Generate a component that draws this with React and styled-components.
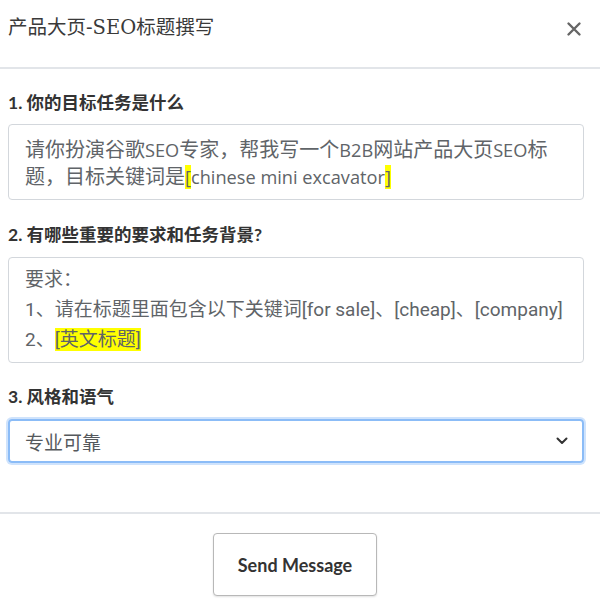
import React from "react";
import styled, { createGlobalStyle } from "styled-components";

const Global = createGlobalStyle`
  html, body { margin: 0; padding: 0; background: #fff; }
  body { font-family: "Lato", "Noto Sans CJK SC", sans-serif; }
  * { box-sizing: border-box; }
`;

const Page = styled.div`
  width: 600px;
  height: 609px;
  display: flex;
  flex-direction: column;
  background: #fff;
`;

const Header = styled.header`
  height: 69px;
  padding: 14px 18px 0 8px;
  display: flex;
  justify-content: space-between;
  align-items: flex-start;
  border-bottom: 2px solid #e2e5e9;
`;

const Title = styled.h1`
  margin: 0;
  font-family: "DejaVu Serif", "Noto Sans CJK SC", serif;
  font-weight: normal;
  font-size: 19.5px;
  line-height: 28px;
  color: #3a3a3a;
`;

const Close = styled.button`
  border: none;
  background: none;
  padding: 0;
  margin-top: 7px;
  width: 16px;
  height: 16px;
  display: flex;
  cursor: pointer;
`;

const Body = styled.main`
  padding: 22px 16px 0 8px;
  display: flex;
  flex-direction: column;
  height: 445px;
  border-bottom: 2px solid #e2e5e9;
`;

const Label = styled.div`
  font-family: "Lato", "Noto Sans CJK SC", sans-serif;
  font-weight: 700;
  font-size: 17.5px;
  line-height: 24px;
  color: #333;
  margin-top: ${(p) => p.$mt || 0}px;
`;

const Box = styled.div`
  margin-top: ${(p) => p.$mt}px;
  height: ${(p) => p.$h}px;
  border: 1px solid #d3d7dc;
  border-radius: 4px;
  padding: ${(p) => p.$pad};
  font-family: ${(p) => p.$font}, "Noto Sans CJK SC", sans-serif;
  font-size: ${(p) => p.$size}px;
  line-height: ${(p) => p.$lh}px;
  color: #606468;
  overflow: hidden;
`;

const Latin = styled.span`
  font-size: ${(p) => p.$size}px;
  line-height: 1;
`;

const Line = styled.div``;

const Mark = styled.span`
  background: #ffff00;
`;

const Select = styled.div`
  margin-top: 10px;
  height: 44px;
  border: 2px solid #8bbcf7;
  border-radius: 4px;
  box-shadow: 0 0 0 2px #cfe3fc;
  padding: 0 14px 0 15px;
  display: flex;
  align-items: center;
  justify-content: space-between;
  font-family: "Roboto", "Noto Sans CJK SC", sans-serif;
  font-size: 19px;
  color: #55595d;
`;

const Footer = styled.footer`
  display: flex;
  justify-content: center;
  padding: 19px 10px 0 0;
`;

const SendButton = styled.button`
  width: 164px;
  height: 63px;
  background: #fff;
  border: 1px solid #b8b8b8;
  border-radius: 4px;
  box-shadow: 0 1px 2px rgba(0, 0, 0, 0.12);
  font-family: "Lato", sans-serif;
  font-weight: 700;
  font-size: 18px;
  color: #333;
  cursor: pointer;
`;

export default function App() {
  return (
    <Page>
      <Global />
      <Header>
        <Title>产品大页-SEO标题撰写</Title>
        <Close aria-label="close">
          <svg width="16" height="16" viewBox="0 0 16 16">
            <path d="M2.5 2.5 L13.5 13.5 M13.5 2.5 L2.5 13.5" stroke="#666" strokeWidth="2.4" strokeLinecap="round" />
          </svg>
        </Close>
      </Header>
      <Body>
        <Label>1. 你的目标任务是什么</Label>
        <Box $mt={9} $h={76} $pad="11px 16px 9px" $lh={27} $size={20} $font={'"Open Sans"'}>
          请你扮演谷歌<Latin $size={18.2}>SEO</Latin>专家，帮我写一个<Latin $size={18.2}>B2B</Latin>网站产品大页<Latin $size={18.2}>SEO</Latin>标题，目标关键词是<Latin $size={18.2}><Mark>[</Mark>chinese mini excavator<Mark>]</Mark></Latin>
        </Box>
        <Label $mt={23}>2. 有哪些重要的要求和任务背景?</Label>
        <Box $mt={10} $h={106} $pad="7px 16px" $lh={30} $size={19} $font={'"Roboto"'}>
          <Line>要求：</Line>
          <Line>1、请在标题里面包含以下关键词[for sale]、[cheap]、[company]</Line>
          <Line>2、<Mark>[英文标题]</Mark></Line>
        </Box>
        <Label $mt={22}>3. 风格和语气</Label>
        <Select>
          <span>专业可靠</span>
          <svg width="12" height="8" viewBox="0 0 12 8">
            <path d="M1.5 1.5 L6 6 L10.5 1.5" fill="none" stroke="#333" strokeWidth="2" strokeLinecap="round" strokeLinejoin="round" />
          </svg>
        </Select>
      </Body>
      <Footer>
        <SendButton>Send Message</SendButton>
      </Footer>
    </Page>
  );
}
